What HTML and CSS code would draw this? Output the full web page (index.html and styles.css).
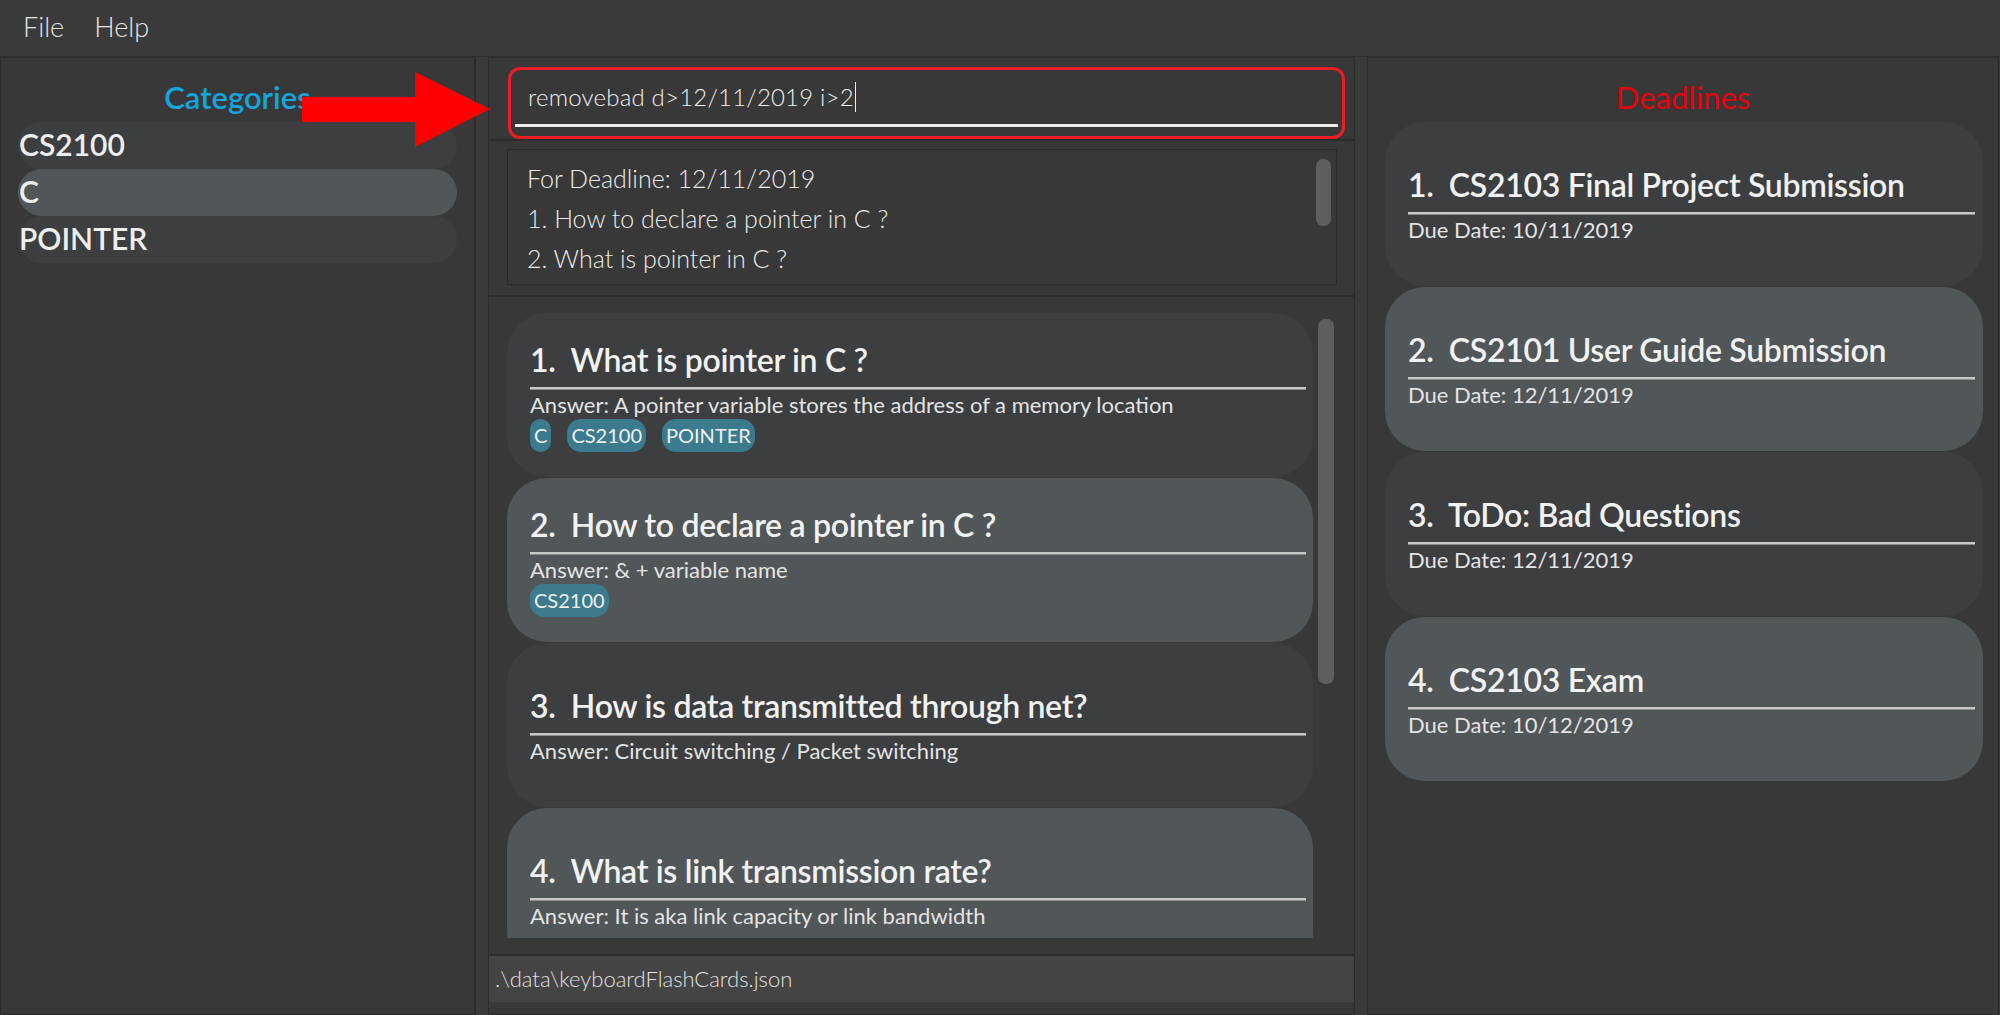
FILE: index.html
```html
<!DOCTYPE html>
<html lang="en">
<head>
<meta charset="UTF-8">
<meta name="viewport" content="width=device-width, initial-scale=1.0">
<title>Keyboard Flash Cards</title>
<link rel="stylesheet" href="styles.css">
</head>
<body>
    <div class="menubar">
        <span class="menu-item">File</span>
        <span class="menu-item">Help</span>
    </div>
    <div class="main">
        <div class="panel left">
            <h2 class="panel-title categories">Categories</h2>
            <div class="cat-list">
                <div class="cat-row">CS2100</div>
                <div class="cat-row selected">C</div>
                <div class="cat-row">POINTER</div>
            </div>
        </div>

        <div class="panel center">
            <div class="command-section">
                <div class="command-box">
                    <div class="command-text">removebad d&gt;12/11/2019 i&gt;2<span class="caret"></span></div>
                </div>
            </div>
            <div class="result-section">
                <div class="result-box">
                    <div class="result-lines">
                        <div>For Deadline: 12/11/2019</div>
                        <div>1. How to declare a pointer in C ?</div>
                        <div>2. What is pointer in C ?</div>
                    </div>
                    <div class="scroll-track small"><div class="thumb"></div></div>
                </div>
            </div>
            <div class="list-section">
                <div class="card-list">
                    <div class="card">
                        <div class="card-title">1.&nbsp;&nbsp;What is pointer in C ?</div>
                        <div class="card-rule"></div>
                        <div class="card-sub">Answer: A pointer variable stores the address of a memory location</div>
                        <div class="tags">
                            <span class="tag">C</span>
                            <span class="tag">CS2100</span>
                            <span class="tag">POINTER</span>
                        </div>
                    </div>
                    <div class="card alt">
                        <div class="card-title">2.&nbsp;&nbsp;How to declare a pointer in C ?</div>
                        <div class="card-rule"></div>
                        <div class="card-sub">Answer: &amp; + variable name</div>
                        <div class="tags">
                            <span class="tag">CS2100</span>
                        </div>
                    </div>
                    <div class="card">
                        <div class="card-title">3.&nbsp;&nbsp;How is data transmitted through net?</div>
                        <div class="card-rule"></div>
                        <div class="card-sub">Answer: Circuit switching / Packet switching</div>
                    </div>
                    <div class="card alt">
                        <div class="card-title">4.&nbsp;&nbsp;What is link transmission rate?</div>
                        <div class="card-rule"></div>
                        <div class="card-sub">Answer: It is aka link capacity or link bandwidth</div>
                    </div>
                </div>
                <div class="scroll-track big"><div class="thumb"></div></div>
            </div>
            <div class="status-bar">.\data\keyboardFlashCards.json</div>
        </div>

        <div class="panel right">
            <h2 class="panel-title deadlines">Deadlines</h2>
            <div class="deadline-list">
                <div class="card">
                    <div class="card-title">1.&nbsp;&nbsp;CS2103 Final Project Submission</div>
                    <div class="card-rule"></div>
                    <div class="card-sub">Due Date: 10/11/2019</div>
                </div>
                <div class="card alt">
                    <div class="card-title">2.&nbsp;&nbsp;CS2101 User Guide Submission</div>
                    <div class="card-rule"></div>
                    <div class="card-sub">Due Date: 12/11/2019</div>
                </div>
                <div class="card">
                    <div class="card-title">3.&nbsp;&nbsp;ToDo: Bad Questions</div>
                    <div class="card-rule"></div>
                    <div class="card-sub">Due Date: 12/11/2019</div>
                </div>
                <div class="card alt">
                    <div class="card-title">4.&nbsp;&nbsp;CS2103 Exam</div>
                    <div class="card-rule"></div>
                    <div class="card-sub">Due Date: 10/12/2019</div>
                </div>
            </div>
        </div>

        <!-- annotation arrow drawn over the screenshot -->
        <svg class="arrow" width="200" height="80" viewBox="0 0 200 80">
            <polygon points="0,25 113,25 113,0 188,37 113,75 113,50 0,50" fill="#ff0000"/>
        </svg>
    </div>
</body>
</html>
```

FILE: styles.css
```css
* {
    box-sizing: border-box;
}
body {
    margin: 0;
    width: 2000px;
    height: 1015px;
    overflow: hidden;
    background: #3a3a3a;
    font-family: Lato, "Open Sans", sans-serif;
    color: #eeeeee;
}
.menubar {
    height: 57px;
    display: flex;
    align-items: center;
    gap: 30px;
    padding-left: 23px;
    padding-bottom: 4px;
    background: #3a3a3a;
    border-bottom: 1px solid #2e2e2e;
}
.menu-item {
    font-size: 27px;
    font-weight: 300;
    color: #e6e6e6;
}
.main {
    position: relative;
    display: grid;
    grid-template-columns: 476px 867px 632px;
    column-gap: 12px;
    height: 958px;
}
.panel {
    background: #383838;
    border: 1px solid #2c2c2c;
    min-height: 0;
}
.panel-title {
    margin: 0;
    text-align: center;
    font-size: 31px;
    font-weight: 600;
    line-height: 40px;
    padding-top: 19px;
    padding-bottom: 2px;
}
.categories {
    color: #13a5de;
}
.deadlines {
    color: #e8000b;
    font-weight: 400;
}

/* left */
.left {
    border-right: 2px solid #2c2c2c;
}
.cat-list {
    padding: 3px 17px 0 17px;
}
.cat-row {
    height: 47px;
    line-height: 45px;
    border-radius: 24px;
    background: #3c3e40;
    font-size: 30px;
    font-weight: 600;
    color: #eeeeee;
    padding-left: 1px;
}
.cat-row.selected {
    background: #515658;
}

/* center */
.center {
    display: flex;
    flex-direction: column;
}
.command-section {
    height: 81px;
    padding: 9px 9px 0 19px;
}
.command-box {
    height: 72px;
    border: 3px solid #ee1c24;
    border-radius: 12px;
    padding: 0 4px;
}
.command-text {
    height: 57px;
    border-bottom: 3px solid #f0f0f0;
    font-size: 24px;
    font-weight: 300;
    letter-spacing: 0.2px;
    color: #f0f0f0;
    padding: 12px 0 0 13px;
    line-height: 30px;
}
.caret {
    display: inline-block;
    width: 1px;
    height: 30px;
    background: #f0f0f0;
    vertical-align: top;
    margin-left: 1px;
}
.result-section {
    border-top: 2px solid #2c2c2c;
    padding: 8px 17px 10px 18px;
}
.result-box {
    position: relative;
    height: 136px;
    border: 1px solid #2a2a2a;
    padding: 8px 0 0 19px;
}
.result-lines {
    font-size: 25px;
    font-weight: 300;
    line-height: 40px;
    color: #ececec;
}
.scroll-track.small {
    position: absolute;
    top: 9px;
    right: 5px;
    width: 15px;
}
.scroll-track.small .thumb {
    height: 67px;
}
.thumb {
    background: #5e5e5e;
    border-radius: 7px;
}
.list-section {
    flex: 1;
    min-height: 0;
    border-top: 2px solid #2c2c2c;
    border-bottom: 2px solid #2c2c2c;
    display: flex;
    padding: 16px 20px 16px 18px;
    overflow: hidden;
}
.card-list {
    width: 806px;
    overflow: hidden;
}
.scroll-track.big {
    margin-left: 5px;
    padding-top: 6px;
    width: 16px;
}
.scroll-track.big .thumb {
    height: 365px;
}
.card {
    height: 164px;
    border-radius: 40px;
    background: #3c3e40;
    display: flex;
    flex-direction: column;
    justify-content: center;
    padding: 0 7px 0 23px;
    margin-bottom: 1px;
}
.card.alt {
    background: #515658;
}
.card-title {
    font-size: 32px;
    font-weight: 600;
    letter-spacing: -0.3px;
    line-height: 44px;
    color: #f2f2f2;
    white-space: nowrap;
}
.card-rule {
    height: 3px;
    margin-top: 5px;
    background: #c8c8c8;
    border-bottom: 1px solid #8c8c8c;
}
.card-sub {
    font-size: 22px;
    font-weight: 400;
    line-height: 30px;
    color: #e4e4e4;
}
.tags {
    display: flex;
    gap: 16px;
    margin-top: -1px;
}
.tag {
    height: 33px;
    line-height: 33px;
    padding: 0 4px;
    border-radius: 14px;
    background: #3c7a8e;
    font-size: 20px;
    color: #f0f0f0;
}
.status-bar {
    height: 46px;
    margin-bottom: 12px;
    background: #444444;
    font-size: 22px;
    font-weight: 300;
    line-height: 46px;
    padding-left: 6px;
    color: #e0e0e0;
}

/* right */
.deadline-list {
    padding: 3px 15px 0 17px;
}
.deadline-list .card {
    padding: 0 8px 0 23px;
}

.arrow {
    position: absolute;
    left: 302px;
    top: 15px;
}
```
